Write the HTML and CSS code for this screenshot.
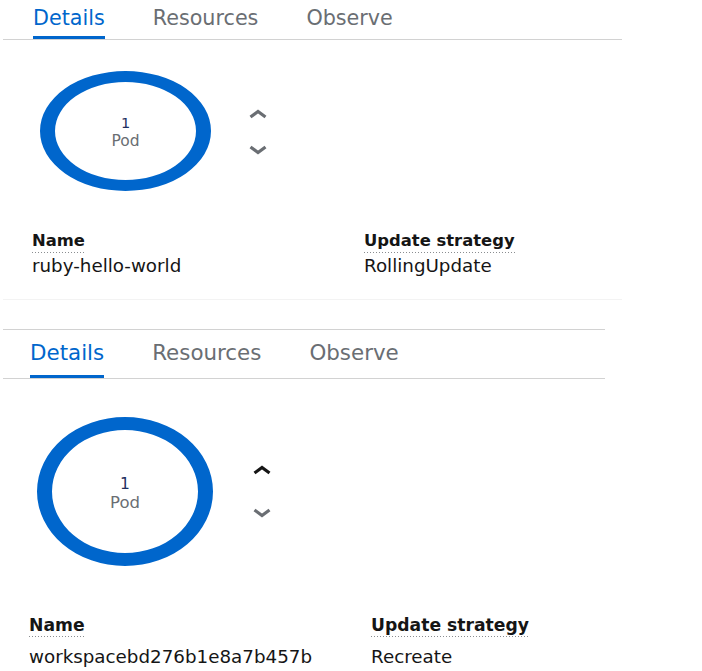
FILE: index.html
```html
<!DOCTYPE html>
<html lang="en">
<head>
<meta charset="utf-8">
<title>Deployment details</title>
<link rel="stylesheet" href="styles.css">
</head>
<body>
<section class="panel panel-a">
  <nav class="tabs">
    <button class="tab active"><span class="tab-text">Details</span></button>
    <button class="tab"><span class="tab-text">Resources</span></button>
    <button class="tab"><span class="tab-text">Observe</span></button>
  </nav>
  <div class="pod-row">
    <div class="ring">
      <span class="ring-count">1</span>
      <span class="ring-unit">Pod</span>
    </div>
    <div class="scale">
      <svg class="chev" viewBox="0 0 20 10" width="20" height="10"><polyline points="2.5,8 10,2.5 17.5,8"/></svg>
      <svg class="chev" viewBox="0 0 20 10" width="20" height="10"><polyline points="2.5,2 10,7.5 17.5,2"/></svg>
    </div>
  </div>
  <dl class="props">
    <div class="prop">
      <dt><span class="term">Name</span></dt>
      <dd>ruby-hello-world</dd>
    </div>
    <div class="prop">
      <dt><span class="term">Update strategy</span></dt>
      <dd>RollingUpdate</dd>
    </div>
  </dl>
</section>

<section class="panel panel-b">
  <nav class="tabs">
    <button class="tab active"><span class="tab-text">Details</span></button>
    <button class="tab"><span class="tab-text">Resources</span></button>
    <button class="tab"><span class="tab-text">Observe</span></button>
  </nav>
  <div class="pod-row">
    <div class="ring">
      <span class="ring-count">1</span>
      <span class="ring-unit">Pod</span>
    </div>
    <div class="scale">
      <svg class="chev chev-dark" viewBox="0 0 20 10" width="20" height="10"><polyline points="2.5,8 10,2.5 17.5,8"/></svg>
      <svg class="chev" viewBox="0 0 20 10" width="20" height="10"><polyline points="2.5,2 10,7.5 17.5,2"/></svg>
    </div>
  </div>
  <dl class="props">
    <div class="prop">
      <dt><span class="term">Name</span></dt>
      <dd>workspacebd276b1e8a7b457b</dd>
    </div>
    <div class="prop">
      <dt><span class="term">Update strategy</span></dt>
      <dd>Recreate</dd>
    </div>
  </dl>
</section>
</body>
</html>
```

FILE: styles.css
```css
html, body {
  margin: 0;
  padding: 0;
  background: #ffffff;
}

body {
  font-family: "DejaVu Sans", "Noto Sans", sans-serif;
  color: #151515;
}

.panel {
  margin-left: 3px;
  display: flex;
  flex-direction: column;
}

/* ---------- tabs ---------- */
.tabs {
  display: flex;
  gap: 48px;
  border-bottom: 1px solid #d2d2d2;
}

.tab {
  appearance: none;
  background: none;
  border: 0;
  padding: 0;
  margin: 0;
  font: inherit;
  color: #6a6e73;
  display: flex;
  align-items: stretch;
  cursor: pointer;
}

.tab-text {
  display: flex;
  align-items: center;
  border-bottom: 3px solid transparent;
}

.tab.active {
  color: #0066cc;
}

.tab.active .tab-text {
  border-bottom-color: #0066cc;
}

/* ---------- pod ring ---------- */
.pod-row {
  display: flex;
  align-items: center;
}

.ring {
  box-sizing: border-box;
  border-style: solid;
  border-color: #0066cc;
  border-radius: 50%;
  display: flex;
  flex-direction: column;
  align-items: center;
  justify-content: center;
}

.ring-count {
  color: #1f2f5f;
}

.ring-unit {
  color: #6a6e73;
}

.scale {
  display: flex;
  flex-direction: column;
  align-items: center;
}

.chev {
  display: block;
  fill: none;
  stroke: #6a6e73;
  stroke-width: 3.2;
  stroke-linecap: butt;
  stroke-linejoin: miter;
}

.chev-dark {
  stroke: #151515;
}

/* ---------- properties ---------- */
.props {
  margin: 0;
  display: grid;
}

.prop {
  display: flex;
  flex-direction: column;
}

.props dt {
  margin: 0;
  font-weight: bold;
  line-height: 20px;
}

.term {
  display: inline-block;
  padding-bottom: 2px;
  background-image: linear-gradient(to right, #8a8d90 50%, transparent 50%);
  background-size: 3px 1px;
  background-repeat: repeat-x;
  background-position: left bottom;
}

.props dd {
  margin: 0;
  font-size: 18.3px;
  line-height: 22px;
}

/* ---------- first panel ---------- */
.panel-a {
  width: 619px;
  border-bottom: 1px solid #f3f3f3;
}

.panel-a .tabs {
  padding-left: 30px;
}

.panel-a .tab {
  height: 39px;
  font-size: 20.7px;
}

.panel-a .pod-row {
  padding: 31px 0 0 37px;
  gap: 37px;
}

.panel-a .ring {
  width: 171px;
  height: 120px;
  border-width: 11px 15px;
  padding-top: 4px;
}

.panel-a .ring-count,
.panel-a .ring-unit {
  font-size: 14.5px;
  line-height: 17px;
}

.panel-a .ring-unit {
  font-size: 15.5px;
  line-height: 18.1px;
}

.panel-a .scale {
  gap: 26px;
  margin-top: 2px;
}

.panel-a .props {
  grid-template-columns: 332px 1fr;
  padding: 40px 0 22px 29px;
}

.panel-a .props dt {
  font-size: 16.4px;
  margin-bottom: 2px;
}

/* ---------- second panel ---------- */
.panel-b {
  width: 602px;
  margin-top: 29px;
  border-top: 1px solid #d2d2d2;
}

.panel-b .tabs {
  padding-left: 27px;
}

.panel-b .tab {
  height: 48px;
  font-size: 21.4px;
}

.panel-b .pod-row {
  padding: 38px 0 0 34px;
  gap: 39px;
}

.panel-b .ring {
  width: 176px;
  height: 149px;
  border-width: 13px 15px;
  padding-top: 5px;
}

.panel-b .ring-count {
  font-size: 15.5px;
  line-height: 18.1px;
}

.panel-b .ring-unit {
  font-size: 16.5px;
  line-height: 19.3px;
}

.panel-b .scale {
  gap: 33px;
}

.panel-b .props {
  grid-template-columns: 342px 1fr;
  padding: 49px 0 0 26px;
}

.panel-b .props dt {
  font-size: 17.2px;
  margin-bottom: 9px;
}
```
